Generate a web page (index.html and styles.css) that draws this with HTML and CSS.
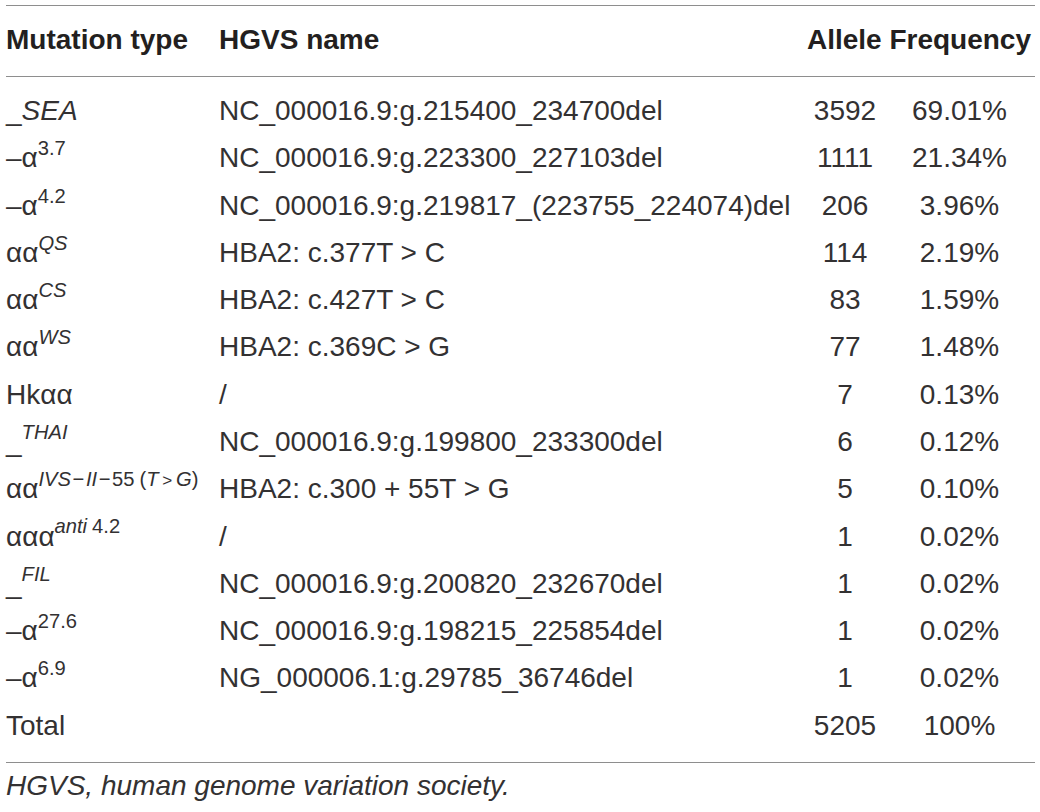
FILE: index.html
```html
<!DOCTYPE html>
<html lang="en">
<head>
<meta charset="utf-8">
<title>Alpha-thalassemia mutations</title>
<link rel="stylesheet" href="styles.css">
</head>
<body>
<div class="wrap">
<table class="tbl">
  <colgroup>
    <col class="c1"><col class="c2"><col class="c3"><col class="c4">
  </colgroup>
  <thead>
    <tr>
      <th class="l">Mutation type</th>
      <th class="l">HGVS name</th>
      <th class="r" colspan="2">Allele Frequency</th>
    </tr>
  </thead>
  <tbody>
    <tr class="first"><td>_<i>SEA</i></td><td>NC_000016.9:g.215400_234700del</td><td class="n">3592</td><td class="p">69.01%</td></tr>
    <tr><td>–α<sup>3.7</sup></td><td>NC_000016.9:g.223300_227103del</td><td class="n">1111</td><td class="p">21.34%</td></tr>
    <tr><td>–α<sup>4.2</sup></td><td>NC_000016.9:g.219817_(223755_224074)del</td><td class="n">206</td><td class="p">3.96%</td></tr>
    <tr><td>αα<sup><i>QS</i></sup></td><td>HBA2: c.377T &gt; C</td><td class="n">114</td><td class="p">2.19%</td></tr>
    <tr><td>αα<sup><i>CS</i></sup></td><td>HBA2: c.427T &gt; C</td><td class="n">83</td><td class="p">1.59%</td></tr>
    <tr><td>αα<sup><i>WS</i></sup></td><td>HBA2: c.369C &gt; G</td><td class="n">77</td><td class="p">1.48%</td></tr>
    <tr><td>Hkαα</td><td>/</td><td class="n">7</td><td class="p">0.13%</td></tr>
    <tr><td>_<sup><i>THAI</i></sup></td><td>NC_000016.9:g.199800_233300del</td><td class="n">6</td><td class="p">0.12%</td></tr>
    <tr><td>αα<sup class="ivs"><i>IVS</i><span class="op">−</span><i>II</i><span class="op">−</span>55<span class="sp"></span>(<i>T</i><span class="gt">&gt;</span><i>G</i>)</sup></td><td>HBA2: c.300 + 55T &gt; G</td><td class="n">5</td><td class="p">0.10%</td></tr>
    <tr><td>ααα<sup><i>anti</i><span class="sp"></span>4.2</sup></td><td>/</td><td class="n">1</td><td class="p">0.02%</td></tr>
    <tr><td>_<sup><i>FIL</i></sup></td><td>NC_000016.9:g.200820_232670del</td><td class="n">1</td><td class="p">0.02%</td></tr>
    <tr><td>–α<sup>27.6</sup></td><td>NC_000016.9:g.198215_225854del</td><td class="n">1</td><td class="p">0.02%</td></tr>
    <tr><td>–α<sup>6.9</sup></td><td>NG_000006.1:g.29785_36746del</td><td class="n">1</td><td class="p">0.02%</td></tr>
    <tr class="last"><td>Total</td><td></td><td class="n">5205</td><td class="p">100%</td></tr>
  </tbody>
</table>
<p class="caption">HGVS, human genome variation society.</p>
</div>
</body>
</html>
```

FILE: styles.css
```css
html, body {
  margin: 0;
  padding: 0;
  background: #ffffff;
}
body {
  font-family: "Liberation Sans", Arial, sans-serif;
  color: #333132;
}
.wrap {
  padding: 5px 0 0 6px;
}
.tbl {
  border-collapse: collapse;
  table-layout: fixed;
  width: 1029px;
  font-size: 28px;
  line-height: 32px;
  border-top: 1px solid #8e8e8e;
  border-bottom: 1px solid #8e8e8e;
}
.c1 { width: 213px; }
.c2 { width: 587px; }
.c3 { width: 78px; }
.c4 { width: 151px; }

.tbl th {
  font-weight: 700;
  padding: 18px 0 20px 0;
  white-space: nowrap;
  border-bottom: 1px solid #8e8e8e;
  color: #231f20;
}
.tbl th.l { text-align: left; }
.tbl th.r { text-align: right; padding-right: 4px; }

.tbl td {
  padding: 7.65px 0;
  white-space: nowrap;
  text-align: left;
  font-weight: 400;
}
.tbl tr.first td { padding-top: 18px; }
.tbl tr.last td { padding-bottom: 20px; }
.tbl td.n, .tbl td.p { text-align: center; }

sup {
  font-size: 0.72em;
  vertical-align: 0.62em;
  line-height: 0;
}
sup.ivs {
  font-size: 0.72em;
}
.op {
  display: inline-block;
  margin: 0 0.08em;
}
.sp {
  display: inline-block;
  width: 0.25em;
}
.gt {
  display: inline-block;
  font-size: 0.85em;
  margin: 0 0.22em;
}
.caption {
  margin: 7px 0 0 0;
  font-size: 28px;
  line-height: 32px;
  font-style: italic;
}
```
